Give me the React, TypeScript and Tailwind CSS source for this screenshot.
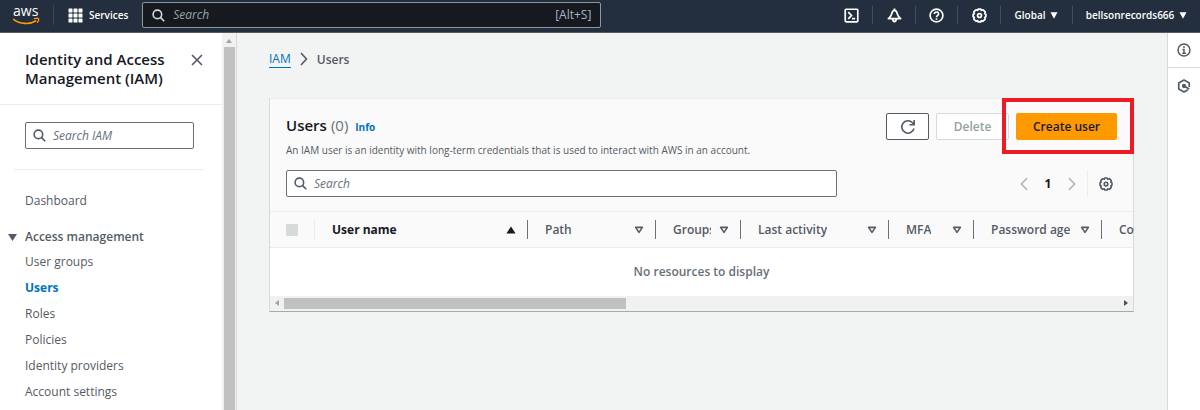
import { useState } from 'react';

interface Column {
  label: string;
  width: string;
  sorted?: boolean;
}

const columns: Column[] = [
  { label: 'User name', width: 'w-[213px]', sorted: true },
  { label: 'Path', width: 'w-[128px]' },
  { label: 'Groups', width: 'w-[85px]' },
  { label: 'Last activity', width: 'w-[148px]' },
  { label: 'MFA', width: 'w-[85px]' },
  { label: 'Password age', width: 'w-[128px]' },
];

const accessLinks = ['User groups', 'Users', 'Roles', 'Policies', 'Identity providers', 'Account settings'];

const SearchIcon = ({ className }: { className: string }) => (
  <svg viewBox="0 0 14 14" className={className} fill="none" stroke="currentColor" strokeWidth="1.7">
    <circle cx="5.8" cy="5.8" r="4.6" />
    <path d="M9 9l4.2 4.2" />
  </svg>
);

const GearIcon = ({ className }: { className: string }) => (
  <svg viewBox="0 0 16 16" className={className} fill="none" stroke="currentColor" strokeLinejoin="round">
    <path
      strokeWidth="1.8"
      d="M6.6 1.2h2.8l.5 1.3 1.9-.6 2.3 2.3-.6 1.9 1.3.5v2.8l-1.3.5.6 1.9-2.3 2.3-1.9-.6-.5 1.3H6.600l-.5-1.300-1.900.6-2.300-2.300.6-1.900-1.300-.5V6.600l1.300-.5-.6-1.900 2.300-2.300 1.900.6z"
    />
    <circle cx="8" cy="8" r="2.100" strokeWidth="1.800" />
  </svg>
);

const SortIcon = ({ sorted }: { sorted?: boolean }) => (
  <svg viewBox="0 0 10 8" className="h-2 w-[10px] shrink-0" aria-hidden="true">
    {sorted ? (
      <path d="M5 .5L9.6 7.5H.4z" fill="#16191f" />
    ) : (
      <path d="M1.6 1.400h6.800L5 6.400z" fill="none" stroke="#545b64" strokeWidth="1.600" strokeLinejoin="round" />
    )}
  </svg>
);

const Caret = () => (
  <svg viewBox="0 0 8 7" className="h-[7px] w-2" aria-hidden="true">
    <path d="M.5.3h7L4 6.700z" fill="currentColor" />
  </svg>
);

const TopBar = () => {
  const cell = 'flex h-[18px] items-center justify-center border-[#414d5c]';

  return (
    <header className="flex h-[33px] items-center border-b border-[#545b64] bg-[#232f3e] pb-[2px] text-white">
      <a href="#home" aria-label="aws home" className="ml-3 flex w-[42px] flex-col border-r border-[#3b4755]">
        <span className="pl-px text-[14px] leading-[12px] font-medium">aws</span>
        <svg viewBox="0 0 28 8" className="h-2 w-7" fill="none" stroke="#f90" aria-hidden="true">
          <path d="M1.200 2.200C8 7.600 18 7.600 24.200 3.800" strokeWidth="1.700" />
          <path d="M21.800 2c2-.8 4-.9 4.600-.3.500.7-.1 2.600-1.300 3.900" strokeWidth="1.300" />
        </svg>
      </a>
      <button type="button" className="ml-[14px] flex items-center gap-[6px] text-[10px] leading-4 font-semibold">
        <svg viewBox="0 0 15 15" className="size-[15px]" fill="currentColor" aria-hidden="true">
          {[0.5, 5.5, 10.5].map((y) => [0.5, 5.5, 10.5].map((x) => <rect key={`${x}-${y}`} x={x} y={y} width="4" height="4" rx=".6" />))}
        </svg>
        Services
      </button>
      <label className="ml-[14px] flex h-[26px] max-w-[459px] flex-1 items-center rounded-xs border border-[#8d9998] bg-[#16191f] px-[9px] text-[#a9b5c4]">
        <SearchIcon className="size-[13px] shrink-0 text-[#d5dbdb]" />
        <input
          type="text"
          aria-label="Search services"
          placeholder="Search"
          className="ml-2 min-w-0 flex-1 bg-transparent text-xs outline-none placeholder:text-[#95a5a6] placeholder:italic"
        />
        <span className="text-xs">[Alt+S]</span>
      </label>
      <div className="ml-auto flex items-center text-[10px] font-semibold">
        <button type="button" aria-label="CloudShell" className={`${cell} w-[42px]`}>
          <svg viewBox="0 0 16 16" className="size-[15px]" fill="none" stroke="currentColor" strokeWidth="1.800">
            <rect x="1.300" y="1.300" width="13.400" height="13.400" rx="1" />
            <path d="M4.500 4.500L8 8l-3.500 3.500M8.500 11.300h3.300" />
          </svg>
        </button>
        <button type="button" aria-label="Notifications" className={`${cell} w-[43px] border-l`}>
          <svg viewBox="0 0 16 16" className="size-[15px]" fill="none" stroke="currentColor" strokeWidth="1.900" strokeLinejoin="round">
            <path d="M8 2.500C5.900 2.500 5.400 4.500 4.900 6.500 4.400 8.600 3.200 9.900 1.500 11.300h13c-1.700-1.400-2.900-2.700-3.400-4.800C10.600 4.500 10.100 2.500 8 2.500zM8 .5v2M6.200 12c0 3.200 3.600 3.200 3.600 0" />
          </svg>
        </button>
        <button type="button" aria-label="Support" className={`${cell} w-[42px] border-l`}>
          <svg viewBox="0 0 16 16" className="size-[15px]" fill="none" stroke="currentColor" strokeWidth="1.800">
            <circle cx="8" cy="8" r="6.800" />
            <path d="M5.800 6.500C5.800 3.500 10.200 3.600 10.200 6.300 10.200 8 8 7.800 8 9.800M8 11v1.500" />
          </svg>
        </button>
        <button type="button" aria-label="Settings" className={`${cell} w-[43px] border-l`}>
          <GearIcon className="size-[15px]" />
        </button>
        <button type="button" className={`${cell} w-[72px] gap-[5px] border-l`}>
          Global
          <Caret />
        </button>
        <button type="button" className={`${cell} w-[128px] gap-[5px] border-l`}>
          bellsonrecords666
          <Caret />
        </button>
      </div>
    </header>
  );
};

const Sidebar = () => (
  <aside className="flex w-[237px] shrink-0 border-r border-[#d5dbdb] bg-white">
    <div className="min-w-0 flex-1">
      <div className="flex h-[72px] items-start justify-between border-b border-[#eaeded] pt-[17px] pr-[19px] pl-[25px]">
        <h2 className="text-[15px] leading-[19px] font-semibold text-[#16191f]">
          Identity and Access
          <br />
          Management (IAM)
        </h2>
        <button type="button" aria-label="Close navigation" className="mt-1 text-[#545b64]">
          <svg viewBox="0 0 12 12" className="size-3" fill="none" stroke="currentColor" strokeWidth="1.600">
            <path d="M1 1l10 10M11 1L1 11" />
          </svg>
        </button>
      </div>
      <div className="mr-[18px] ml-[14px] border-b border-[#eaeded] pt-[17px] pr-[10px] pb-5 pl-[11px]">
        <label className="flex h-[27px] items-center rounded-xs border border-[#687078] px-[7px]">
          <SearchIcon className="size-[13px] shrink-0 text-[#545b64]" />
          <input
            type="text"
            aria-label="Search IAM"
            placeholder="Search IAM"
            className="ml-[7px] min-w-0 flex-1 bg-transparent text-xs outline-none placeholder:text-[#687078] placeholder:italic"
          />
        </label>
      </div>
      <nav className="pt-[23px] pl-[25px] text-xs leading-4 text-[#545b64]">
        <a href="#dashboard">Dashboard</a>
        <button type="button" className="mt-5 -ml-[17px] flex items-center gap-2 font-semibold">
          <svg viewBox="0 0 9 7" className="h-[7px] w-[9px]" fill="currentColor" aria-hidden="true">
            <path d="M0 0h9L4.500 7z" />
          </svg>
          Access management
        </button>
        <ul className="mt-1">
          {accessLinks.map((link) => (
            <li key={link} className="flex h-[26px] items-center">
              <a href={`#${link}`} className={link === 'Users' ? 'font-bold text-[#0073bb]' : ''}>
                {link}
              </a>
            </li>
          ))}
        </ul>
      </nav>
    </div>
    {/* Scrollbar */}
    <div className="flex w-[14px] flex-col items-center bg-[#f1f1f1]">
      <svg viewBox="0 0 6 4" className="mt-[6px] mb-1 h-1 w-[6px] shrink-0" fill="#a3a3a3" aria-hidden="true">
        <path d="M3 0l3 4H0z" />
      </svg>
      <div className="w-[11px] flex-1 bg-[#c1c1c1]" />
    </div>
  </aside>
);

const UsersPanel = () => {
  const [query, setQuery] = useState('');

  return (
    <section className="mt-[30px] border border-t-[#eaeded] border-r-[#d5dbdb] border-b-[#a2abb0] border-l-[#d5dbdb] bg-[#fafafa]">
      <div className="flex items-start justify-between px-4 pt-[14px]">
        <div className="pt-[2px]">
          <h1 className="flex items-baseline text-[15px] leading-5 font-semibold text-[#16191f]">
            Users
            <span className="ml-1 font-normal text-[#687078]">(0)</span>
            <a href="#info" className="ml-[7px] text-[10px] font-bold text-[#0073bb]">
              Info
            </a>
          </h1>
          <p className="mt-[5px] text-[10px] leading-4 text-[#545b64]">
            An IAM user is an identity with long-term credentials that is used to interact with AWS in an account.
          </p>
        </div>
        <div className="flex gap-[7px] text-xs font-semibold">
          <button type="button" aria-label="Refresh" className="flex h-[27px] w-[43px] items-center justify-center rounded-xs border border-[#545b64] bg-white text-[#545b64]">
            <svg viewBox="0 0 16 16" className="size-4" fill="none" stroke="currentColor" strokeWidth="1.600">
              <path d="M14 9.500A6.200 6.200 0 1 1 12.500 3.700L14 5.500M14.200 1v4.800H9.500" />
            </svg>
          </button>
          <button type="button" disabled className="h-[27px] w-[73px] rounded-xs border border-[#d5dbdb] bg-white text-[#95a0a0]">
            Delete
          </button>
          <div className="relative">
            <button type="button" className="h-[27px] w-[101px] rounded-xs bg-[#f90] text-[#16191f]">
              Create user
            </button>
            <div className="pointer-events-none absolute -top-[15px] -right-[17px] -bottom-[14px] -left-[14px] border-4 border-[#ed1c24]" />
          </div>
        </div>
      </div>

      <div className="mt-[12px] flex items-center pr-[20px] pb-[14px] pl-4">
        <label className="flex h-[27px] max-w-[551px] flex-1 items-center rounded-xs border border-[#687078] bg-white px-[7px]">
          <SearchIcon className="size-[13px] shrink-0 text-[#545b64]" />
          <input
            type="text"
            aria-label="Search users"
            placeholder="Search"
            value={query}
            onChange={(e) => setQuery(e.target.value)}
            className="ml-[7px] min-w-0 flex-1 bg-transparent text-xs outline-none placeholder:text-[#687078] placeholder:italic"
          />
        </label>
        <div className="ml-auto flex items-center text-[#545b64]">
          <button type="button" aria-label="Previous page" className="text-[#aab7b8]">
            <svg viewBox="0 0 8 14" className="h-[14px] w-2" fill="none" stroke="currentColor" strokeWidth="1.600">
              <path d="M7 1L1.500 7 7 13" />
            </svg>
          </button>
          <button type="button" className="w-[40px] text-xs font-bold text-[#16191f]">
            1
          </button>
          <button type="button" aria-label="Next page" className="text-[#aab7b8]">
            <svg viewBox="0 0 8 14" className="h-[14px] w-2" fill="none" stroke="currentColor" strokeWidth="1.600">
              <path d="M1 1l5.500 6L1 13" />
            </svg>
          </button>
          <div className="ml-[11px] h-[27px] border-l border-[#eaeded]" />
          <button type="button" aria-label="Preferences" className="ml-[11px]">
            <GearIcon className="size-[14px]" />
          </button>
        </div>
      </div>

      <table className="w-full table-fixed border-collapse text-xs leading-4 text-[#545b64]">
        <thead>
          <tr className="h-[36px] border-y border-[#eaeded]">
            <th className="w-[45px] p-0">
              <div className="flex h-[19px] items-center border-r border-[#eaeded] pl-4">
                <input type="checkbox" disabled aria-label="Select all users" className="size-3 appearance-none rounded-[1px] bg-[#d5dbdb]" />
              </div>
            </th>
            {columns.map((col) => (
              <th key={col.label} className={`${col.width} p-0 text-left font-semibold`}>
                <div className="flex h-[19px] items-center justify-between gap-2 border-r border-[#687078] pr-[11px] pl-[17px]">
                  <span className={col.sorted ? 'font-bold text-[#16191f]' : 'overflow-hidden whitespace-nowrap'}>{col.label}</span>
                  <SortIcon sorted={col.sorted} />
                </div>
              </th>
            ))}
            <th className="p-0 pl-[17px] text-left font-semibold">Co</th>
          </tr>
        </thead>
        <tbody>
          <tr className="h-[48px] bg-white">
            <td colSpan={8} className="p-0 text-center font-semibold text-[#687078]">
              No resources to display
            </td>
          </tr>
        </tbody>
      </table>

      {/* Horizontal scrollbar */}
      <div className="flex h-[15px] items-center bg-[#f1f1f1] px-[5px]">
        <svg viewBox="0 0 4 6" className="h-[6px] w-1" fill="#a3a3a3" aria-hidden="true">
          <path d="M4 0v6L0 3z" />
        </svg>
        <div className="mx-[5px] h-[11px] flex-1">
          <div className="h-full w-[41%] bg-[#c1c1c1]" />
        </div>
        <svg viewBox="0 0 4 6" className="h-[6px] w-1" fill="#505050" aria-hidden="true">
          <path d="M0 0v6l4-3z" />
        </svg>
      </div>
    </section>
  );
};

const App: React.FC = () => {
  return (
    <div className="flex min-h-screen flex-col bg-[#f2f3f3] font-['Open_Sans',sans-serif]">
      <TopBar />
      <div className="flex flex-1">
        <Sidebar />
        <main className="min-w-0 flex-1 pr-[33px] pl-8">
          <nav aria-label="Breadcrumb" className="flex items-center pt-[17px] text-xs leading-[17px] text-[#545b64]">
            <a href="#iam" className="border-b border-[#0073bb] text-[#0073bb]">
              IAM
            </a>
            <svg viewBox="0 0 8 14" className="mx-[9px] h-[14px] w-2" fill="none" stroke="currentColor" strokeWidth="1.600" aria-hidden="true">
              <path d="M1 1l5.500 6L1 13" />
            </svg>
            <span className="font-semibold">Users</span>
          </nav>
          <UsersPanel />
        </main>
        <aside className="w-[33px] shrink-0 border-l border-[#d5dbdb] bg-white text-[#545b64]">
          <button type="button" aria-label="Info panel" className="flex h-[35px] w-full items-center justify-center border-b border-[#d5dbdb]">
            <svg viewBox="0 0 16 16" className="size-[14px]" fill="none" stroke="currentColor" strokeWidth="1.700">
              <circle cx="8" cy="8" r="6.800" />
              <path d="M8 3.800v1.800M6.300 7.400H8v4M6 11.600h4.200" />
            </svg>
          </button>
          <button type="button" aria-label="Diagnostics" className="flex h-[35px] w-full items-center justify-center">
            <svg viewBox="0 0 16 16" className="size-[14px]" fill="none" stroke="currentColor" strokeWidth="1.900" strokeLinejoin="round">
              <path d="M14 9V4.600L8 1.200 2 4.600v6.800l6 3.400 4.500-2.600" />
              <circle cx="8" cy="8" r="1.500" fill="currentColor" />
              <path d="M8.500 8.300l5.500 3.100" />
            </svg>
          </button>
        </aside>
      </div>
    </div>
  );
};

export default App;
